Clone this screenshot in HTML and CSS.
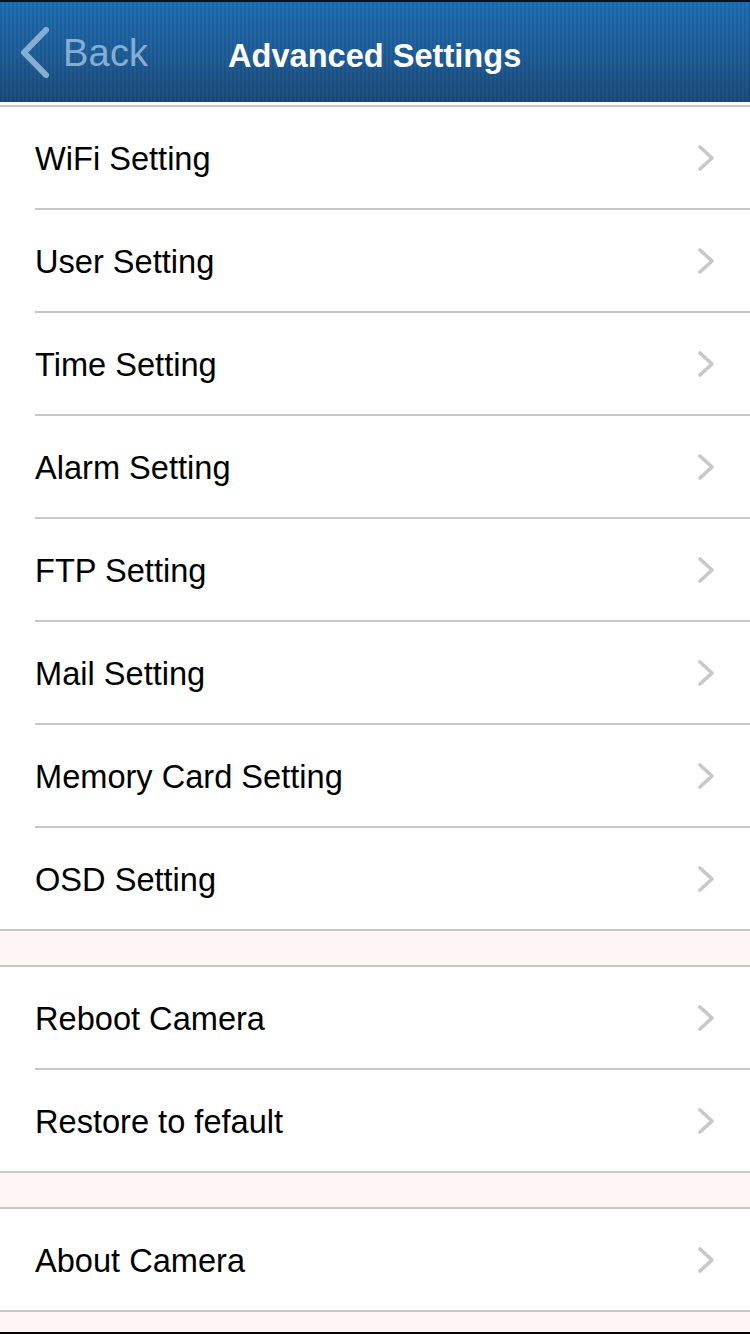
FILE: index.html
```html
<!DOCTYPE html>
<html>
<head>
<meta charset="utf-8">
<link rel="stylesheet" href="styles.css">
</head>
<body>
<div class="screen">
  <header class="navbar">
    <div class="back">
      <svg class="back-icon" width="34" height="52" viewBox="0 0 34 52"><path d="M29 3 L7 25.5 L29 48" fill="none" stroke="#86aed3" stroke-width="6" stroke-linecap="round" stroke-linejoin="round"/></svg>
      <span class="back-text">Back</span>
    </div>
    <div class="title">Advanced Settings</div>
  </header>
  <div class="gap-top"></div>
  <ul class="group">
    <li class="row"><span>WiFi Setting</span><svg class="chev" viewBox="0 0 18 28"><path d="M3 3 L15 14 L3 25" /></svg></li>
    <li class="row"><span>User Setting</span><svg class="chev" viewBox="0 0 18 28"><path d="M3 3 L15 14 L3 25" /></svg></li>
    <li class="row"><span>Time Setting</span><svg class="chev" viewBox="0 0 18 28"><path d="M3 3 L15 14 L3 25" /></svg></li>
    <li class="row"><span>Alarm Setting</span><svg class="chev" viewBox="0 0 18 28"><path d="M3 3 L15 14 L3 25" /></svg></li>
    <li class="row"><span>FTP Setting</span><svg class="chev" viewBox="0 0 18 28"><path d="M3 3 L15 14 L3 25" /></svg></li>
    <li class="row"><span>Mail Setting</span><svg class="chev" viewBox="0 0 18 28"><path d="M3 3 L15 14 L3 25" /></svg></li>
    <li class="row"><span>Memory Card Setting</span><svg class="chev" viewBox="0 0 18 28"><path d="M3 3 L15 14 L3 25" /></svg></li>
    <li class="row"><span>OSD Setting</span><svg class="chev" viewBox="0 0 18 28"><path d="M3 3 L15 14 L3 25" /></svg></li>
  </ul>
  <div class="spacer"></div>
  <ul class="group">
    <li class="row"><span>Reboot Camera</span><svg class="chev" viewBox="0 0 18 28"><path d="M3 3 L15 14 L3 25" /></svg></li>
    <li class="row"><span>Restore to fefault</span><svg class="chev" viewBox="0 0 18 28"><path d="M3 3 L15 14 L3 25" /></svg></li>
  </ul>
  <div class="spacer"></div>
  <ul class="group">
    <li class="row"><span>About Camera</span><svg class="chev" viewBox="0 0 18 28"><path d="M3 3 L15 14 L3 25" /></svg></li>
  </ul>
  <div class="bottom-fill"></div>
</div>
</body>
</html>
```
FILE: styles.css
```css
html, body {
  margin: 0;
  padding: 0;
  background: #fff5f5;
}
.screen {
  width: 750px;
  height: 1334px;
  display: flex;
  flex-direction: column;
  overflow: hidden;
  background: #fff5f5;
  font-family: "Liberation Sans", Arial, sans-serif;
  border-bottom: 2px solid #000;
  box-sizing: border-box;
}
.navbar {
  height: 102px;
  flex: none;
  box-sizing: border-box;
  border-top: 2px solid #111;
  position: relative;
  display: flex;
  align-items: center;
  background:
    repeating-linear-gradient(90deg, rgba(0,0,0,0.05) 0 2px, rgba(255,255,255,0.02) 2px 4px),
    linear-gradient(180deg, #1e6cb1 0%, #1d5f9c 45%, #1c4a78 100%);
}
.back {
  display: flex;
  align-items: center;
  margin-left: 17px;
  gap: 12px;
}
.back-icon {
  display: block;
  margin-top: 2px;
}
.back-text {
  color: #86aed3;
  font-size: 38px;
  letter-spacing: 0.2px;
  margin-top: 2px;
}
.title {
  position: absolute;
  left: 228px;
  top: 35px;
  color: #fff;
  font-weight: bold;
  font-size: 32.6px;
}
.gap-top {
  height: 3px;
  background: #fff;
  border-bottom: 2px solid #c8c7cc;
  flex: none;
}
.group {
  list-style: none;
  margin: 0;
  padding: 0 0 0 35px;
  background: #fff;
  flex: none;
}
.spacer + .group,
.group + .spacer {
  border-top: 2px solid #c8c7cc;
}
.row {
  height: 101px;
  display: flex;
  align-items: center;
  justify-content: space-between;
  padding-right: 35px;
  border-bottom: 2px solid #c8c7cc;
  font-size: 32.6px;
  color: #000;
}
.row:last-child {
  border-bottom: none;
}
.row span {
  margin-top: 2px;
}
.chev {
  width: 18px;
  height: 28px;
  margin-top: 1px;
  fill: none;
  stroke: #c7c7cc;
  stroke-width: 3.6;
  stroke-linecap: round;
  stroke-linejoin: round;
}
.spacer {
  height: 34px;
  flex: none;
  background: #fff5f5;
}
.bottom-fill {
  flex: 1;
  border-top: 2px solid #c8c7cc;
  background: #fff5f5;
}
```
